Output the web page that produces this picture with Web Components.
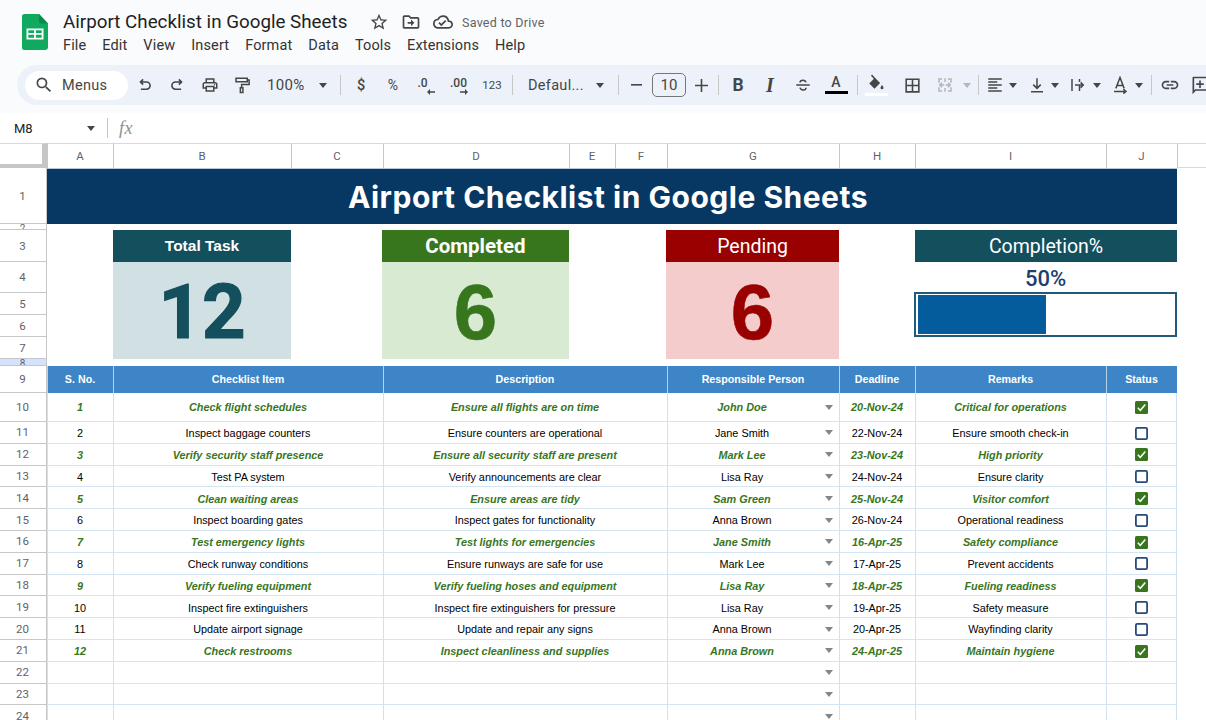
<!DOCTYPE html>
<html lang="en"><head><meta charset="utf-8"><title>Airport Checklist in Google Sheets</title>
<style>html,body{margin:0;padding:0;background:#fff;overflow:hidden;width:1206px;height:720px;font-family:"Liberation Sans",Arial,sans-serif}</style>
</head><body>
<sheets-app></sheets-app>
<script>
const I={
search:'<path fill="currentColor" d="M15.5 14h-.79l-.28-.27A6.471 6.471 0 0 0 16 9.5 6.5 6.5 0 1 0 9.5 16c1.61 0 3.09-.59 4.23-1.57l.27.28v.79l5 4.99L20.49 19l-4.99-5zm-6 0C7.01 14 5 11.99 5 9.5S7.01 5 9.5 5 14 7.01 14 9.5 11.99 14 9.5 14z"/>',
undo:'<path fill="none" stroke="currentColor" stroke-width="2.200" d="M9.500 4.500 6 8l3.500 3.500M6 8h8a4.800 4.800 0 0 1 0 9.600H6.500"/>',
redo:'<path fill="none" stroke="currentColor" stroke-width="2.200" d="M14.500 4.500 18 8l-3.500 3.500M18 8h-8a4.800 4.800 0 0 0 0 9.600h7.500"/>',
print:'<path fill="currentColor" d="M19 8h-1V3H6v5H5c-1.66 0-3 1.34-3 3v6h4v4h12v-4h4v-6c0-1.66-1.34-3-3-3zM8 5h8v3H8V5zm8 12v2H8v-4h8v2zm2-2v-2H6v2H4v-4c0-.55.45-1 1-1h14c.55 0 1 .45 1 1v4h-2z"/><circle fill="currentColor" cx="18" cy="11.5" r="1"/>',
paint:'<path fill="none" stroke="currentColor" stroke-width="2" d="M4 3h15v4.500H4zM19 5.200h2.500v6H11.500v4M9.800 15.500h3.400V22H9.800z"/>',
star:'<path fill="currentColor" d="M22 9.24l-7.19-.62L12 2 9.19 8.63 2 9.24l5.46 4.73L5.82 21 12 17.27 18.18 21l-1.63-7.03L22 9.24zM12 15.4l-3.76 2.27 1-4.28-3.32-2.88 4.38-.38L12 6.1l1.71 4.04 4.38.38-3.32 2.88 1 4.28L12 15.4z"/>',
move:'<path fill="currentColor" d="M20 6h-8l-2-2H4c-1.1 0-1.99.9-1.99 2L2 18c0 1.1.9 2 2 2h16c1.1 0 2-.9 2-2V8c0-1.1-.9-2-2-2zm0 12H4V6h5.17l2 2H20v10zm-8-4H8v-2h4V9l4 4-4 4v-3z"/>',
cloud:'<path fill="currentColor" d="M19.35 10.04A7.49 7.49 0 0 0 12 4C9.11 4 6.6 5.64 5.35 8.04A5.994 5.994 0 0 0 0 14c0 3.31 2.69 6 6 6h13c2.76 0 5-2.24 5-5 0-2.64-2.05-4.78-4.65-4.96zM19 18H6c-2.21 0-4-1.79-4-4 0-2.05 1.53-3.76 3.56-3.97l1.07-.11.5-.95A5.469 5.469 0 0 1 12 6c2.62 0 4.88 1.86 5.39 4.43l.3 1.5 1.53.11A2.98 2.98 0 0 1 22 15c0 1.65-1.35 3-3 3zm-9-3.82l-2.09-2.09L6.5 13.5 10 17l6.01-6.01-1.41-1.41z"/>',
borders:'<path fill="currentColor" d="M3 3v18h18V3H3zm8 16H5v-6h6v6zm0-8H5V5h6v6zm8 8h-6v-6h6v6zm0-8h-6V5h6v6z"/>',
link:'<path fill="currentColor" d="M3.9 12c0-1.71 1.39-3.1 3.1-3.1h4V7H7c-2.76 0-5 2.24-5 5s2.24 5 5 5h4v-1.9H7c-1.71 0-3.1-1.39-3.1-3.1zM8 13h8v-2H8v2zm9-6h-4v1.9h4c1.71 0 3.1 1.39 3.1 3.1s-1.39 3.1-3.1 3.1h-4V17h4c2.76 0 5-2.24 5-5s-2.24-5-5-5z"/>',
strike:'<path fill="none" stroke="currentColor" stroke-width="2" d="M3 12h18M16 8.500C15.500 6.500 14 5.500 12 5.500S8 6.500 8 8.500M8 15.500c.5 2 2 3 4 3s4-1 4-3"/>',
fill:'<path fill="none" stroke="currentColor" stroke-width="2" d="M6 1.500 11 7"/><path fill="currentColor" d="M10.500 5 3 12.500 10 19.500 17.500 12z"/><path fill="currentColor" d="M20 14.500s-2 2.300-2 3.700a2 2 0 0 0 4 0c0-1.400-2-3.700-2-3.700z"/>',
merge:'<path fill="none" stroke="currentColor" stroke-width="2" d="M8 4H4v5M4 15v5h4M16 4h4v5M20 15v5h-4M11 12H5M8 9l-3 3 3 3M13 12h6M16 9l3 3-3 3M12 3v5M12 16v5"/>',
align:'<path fill="currentColor" d="M3 3h18v2H3zM3 7h12v2H3zM3 11h18v2H3zM3 15h12v2H3zM3 19h18v2H3z"/>',
valign:'<path fill="none" stroke="currentColor" stroke-width="2" d="M12 3v13M7 11.500l5 5 5-5M4 21h16"/>',
wrap:'<path fill="none" stroke="currentColor" stroke-width="2" d="M4 4v16M14 4v4M14 12v8M8 12h11M15.500 8.500 19 12l-3.500 3.500"/>',
rotate:'<path fill="none" stroke="currentColor" stroke-width="2" d="M4 20.500h16M16.500 17.500 20 20.500l-3.500 3"/><path fill="none" stroke="currentColor" stroke-width="2" d="M6.500 16.500 12 2l5.500 14.500M8 12.500h8"/>',
comment:'<path fill="currentColor" d="M4 2h17a1 1 0 0 1 1 1v15a1 1 0 0 1-1 1H7l-4 4V3a1 1 0 0 1 1-1zm1 2v14.200L6.200 17H20V4zm6 2.500h2V10h3.500v2H13v3.500h-2V12H7.500v-2H11z"/>'
};
const svg=(n,s=18,extra='')=>`<svg viewBox="0 0 24 24" width="${s}" height="${s}" style="display:block;${extra}" aria-hidden="true">${I[n]}</svg>`;

class TitleBar extends HTMLElement{constructor(){super();const r=this.attachShadow({mode:'open'});
const menus=['File','Edit','View','Insert','Format','Data','Tools','Extensions','Help'];
r.innerHTML=`<style>
:host{display:flex;height:65px;box-sizing:border-box;padding:14px 0 0 22px;background:#f9fbfd;color:#202124;font-family:Roboto,sans-serif}
.logo{width:26px;height:36px;flex:none}
.txt{margin-left:15px;display:flex;flex-direction:column}
.top{display:flex;align-items:center;height:18px;margin-top:-1px}
h1{font:400 18.800px/18px Roboto,sans-serif;margin:0;color:#1f1f1f;width:306px;white-space:nowrap}
.ic{color:#444746;margin-right:12px}
.saved{font:400 12.500px Roboto,sans-serif;color:#5f6368;margin-left:-3px;letter-spacing:.25px}
nav{display:flex;gap:16px;margin-top:6px;font:400 14.500px/17px Roboto,sans-serif;color:#333;letter-spacing:.13px}
</style>
<svg class="logo" viewBox="0 0 26 36"><path fill="#11a860" d="M2.500 0H17l9 9.500V33a3 3 0 0 1-3 3H2.500a2.500 2.500 0 0 1-2.500-2.500V2.500A2.500 2.500 0 0 1 2.500 0z"/><path fill="#0d8a4e" d="M17 0l9 9.500h-7a2 2 0 0 1-2-2z"/><path fill="#fff" d="M4.500 14.500h17v11h-17zm1.800 1.800V19h5.800v-2.700zm7.600 0V19h5.800v-2.700zm-7.600 4.400v3h5.800v-3zm7.600 0v3h5.800v-3z"/></svg>
<div class="txt"><div class="top"><h1>Airport Checklist in Google Sheets</h1>
<span class="ic">${svg('star',20)}</span><span class="ic">${svg('move',20)}</span><span class="ic">${svg('cloud',20)}</span><span class="saved">Saved to Drive</span></div>
<nav>${menus.map(m=>`<span>${m}</span>`).join('')}</nav></div>`;}}
customElements.define('title-bar',TitleBar);

class ToolBar extends HTMLElement{constructor(){super();const r=this.attachShadow({mode:'open'});
const it=(w,inner,ml=0,cl='')=>`<span class="it ${cl}" style="width:${w}px;margin-left:${ml}px">${inner}</span>`;
const car=(w=8,ml=0,c='')=>it(w,'<i class="car"></i>',ml,c);
const sep=(w,ml=0)=>it(w,'<b class="sep"></b>',ml);
const ic=(w,n,s=18,ml=0,c='')=>it(w,svg(n,s),ml,c);
const lArr='<svg class="ar" width="8" height="6" viewBox="0 0 8 6"><path d="M3 0 0 3l3 3V3.800h5V2.200H3z" fill="currentColor"/></svg>';
const rArr='<svg class="ar" width="8" height="6" viewBox="0 0 8 6"><path d="M5 0l3 3-3 3V3.800H0V2.200h5z" fill="currentColor"/></svg>';
r.innerHTML=`<style>
:host{display:block;background:#f9fbfd;height:48px}
.bar{height:40px;background:#edf2fa;margin-left:17px;border-radius:20px 0 0 20px;display:flex;align-items:center;padding-left:8px;overflow:hidden;color:#444746;font:400 13.500px Roboto,sans-serif}
.it{flex:none;display:flex;align-items:center;justify-content:center;height:30px;white-space:nowrap}
.pill{width:103px;height:29px;background:#fff;border-radius:15px;display:flex;align-items:center;flex:none;color:#444746;font-size:14.500px;letter-spacing:.3px}
.pill svg{margin:0 8px 0 9px}
.car{display:block;width:0;height:0;border:4.500px solid transparent;border-top:5px solid #444746;border-bottom:0}
.dis .car{border-top-color:#b4b6b8}
.dis{color:#b4b6b8}
.sep{display:block;width:1px;height:20px;background:#c7c7c7}
.box{box-sizing:border-box;width:34px;height:24px;border:1px solid #747775;border-radius:5px;display:flex;align-items:center;justify-content:center;font-size:15px}
.zoom{justify-content:space-between;box-sizing:border-box;padding:0 9px 0 10px;font-size:15px;letter-spacing:.3px}
.font{justify-content:space-between;box-sizing:border-box;padding:0 8px 0 13px;font-size:14.500px;letter-spacing:.3px}
.n{font-size:14px}
.dol{font-weight:500;font-size:14.500px}
.fmt{display:flex;flex-direction:column;line-height:11px;font-size:12px;font-weight:500;margin-top:2px}
.fmt .ar{display:block;align-self:flex-end}
.a{flex-direction:column;font-weight:500;font-size:14px;line-height:13px}
.a s{display:block;text-decoration:none;width:23px;height:3.500px;background:#000;margin-top:2px}
.bi{font-size:17.500px;font-weight:700;font-family:Roboto,sans-serif}
.ii{font-size:20px;font-weight:700;font-style:italic;font-family:"Liberation Serif",serif}
.fillw{flex-direction:column}
.fillw s{display:block;width:23px;height:3.500px;background:#fff;margin-top:1px}
</style><div class="bar">
<span class="pill">${svg('search',20)}<span>Menus</span></span>
${ic(32,'undo',18,1)}${ic(32,'redo')}${ic(33,'print')}${ic(31,'paint')}
${it(79,'<span>100%</span><i class="car"></i>',0,'zoom')}
${sep(9)}
${it(32,'<span>$</span>',0,'dol')}${it(32,'<span>%</span>',0,'n')}
${it(34,'<span class="fmt" style="width:17px"><span>.0</span>'+lArr+'</span>')}${it(32,'<span class="fmt" style="width:18px"><span>.00</span>'+rArr+'</span>')}
${it(34,'<span style="font-size:11.500px">123</span>')}
${sep(6)}
${it(97,'<span>Defaul...</span><i class="car"></i>',0,'font')}
${sep(13)}
${it(22,'<svg width="11" height="2" style="display:block"><rect width="11" height="1.600" fill="currentColor"/></svg>')}
${it(44,'<span class="box">10</span>')}
${it(20,'<svg width="13" height="13" style="display:block"><path d="M5.700 0h1.600v5.700H13v1.600H7.300V13H5.700V7.300H0V5.700h5.700z" fill="currentColor"/></svg>')}
${sep(14)}
${it(26,'<span>B</span>',0,'bi')}${it(38,'<span>I</span>',0,'ii')}${ic(28,'strike',18)}
${it(38,'<span>A</span><s></s>',0,'a')}
${sep(4)}
${it(34,svg('fill',18)+'<s></s>',0,'fillw')}${ic(38,'borders',19)}${ic(28,'merge',18,0,'dis')}${car(16,0,'dis')}
${sep(6)}
${ic(28,'align',18)}${car()}${ic(28,'valign',18,6)}${car()}${ic(28,'wrap',18,5)}${car(8,1)}${ic(28,'rotate',18,5)}${car(8,1)}
${sep(16)}${ic(22,'link',20)}${ic(28,'comment',20,5)}
</div>`;}}
customElements.define('tool-bar',ToolBar);

class FormulaBar extends HTMLElement{constructor(){super();this.attachShadow({mode:'open'}).innerHTML=`<style>
:host{display:flex;align-items:center;height:30px;background:#fff;color:#444746;box-sizing:border-box;font:400 13px Roboto,sans-serif}
.nm{padding-left:14px;width:73px;color:#202124}
.car{width:0;height:0;border:4.500px solid transparent;border-top:5px solid #444746;border-bottom:0}
.sep{width:1px;height:20px;background:#c7c7c7;margin:0 11px 0 12px}
.fx{font:italic 400 18px "Liberation Serif",serif;color:#8b9095;letter-spacing:.5px}
</style><span class="nm">M8</span><i class="car"></i><b class="sep"></b><span class="fx">fx</span>`;}}
customElements.define('formula-bar',FormulaBar);

class KpiCard extends HTMLElement{constructor(){super();this.attachShadow({mode:'open'}).innerHTML=`<style>
:host{display:grid;grid-template-rows:32px 1fr;min-width:0;min-height:0;text-align:center}
.h{background:var(--head);color:#fff;display:flex;align-items:center;justify-content:center;font:var(--hfont);padding-bottom:var(--hp,0)}
.v{background:var(--soft);color:var(--head);display:flex;align-items:center;justify-content:center;font:var(--vfont);-webkit-text-stroke:var(--vs) var(--head);padding-top:2px}
</style><div class="h"><slot name="title"></slot></div><div class="v"><slot name="value"></slot></div>`;}}
customElements.define('kpi-card',KpiCard);

class ProgressCard extends HTMLElement{constructor(){super();this.attachShadow({mode:'open'}).innerHTML=`<style>
:host{display:flex;flex-direction:column;min-width:0;min-height:0;margin-left:-1px}
.h{height:32px;margin-left:1px;background:#134f5c;color:#fff;display:flex;align-items:center;justify-content:center;font:400 19.500px Roboto,sans-serif}
.p{height:30px;display:flex;align-items:center;justify-content:center;font:500 22px Roboto,sans-serif;color:#1c3f6e;margin-top:1px}
.t{box-sizing:border-box;height:45px;border:2px solid #1f5a78;padding:1px 2px;margin-top:-1px}
.f{height:100%;width:50%;background:#045c9c}
</style><div class="h"><slot></slot></div><div class="p">50%</div><div class="t"><div class="f"></div></div>`;}}
customElements.define('progress-card',ProgressCard);

class CheckMark extends HTMLElement{constructor(){super();const c=this.hasAttribute('checked');this.attachShadow({mode:'open'}).innerHTML=`<style>
:host{display:block;width:13px;height:13px}
svg{display:block}
</style><svg width="13" height="13" viewBox="0 0 13 13">${c?'<rect width="13" height="13" rx="1.500" fill="#38761d"/><path d="M2.800 6.800 5.300 9.300 10.300 3.500" fill="none" stroke="#fff" stroke-width="1.500"/>':'<rect x=".9" y=".9" width="11.200" height="11.200" rx="1.300" fill="none" stroke="#274a78" stroke-width="1.800"/>'}</svg>`;}}
customElements.define('check-mark',CheckMark);

const DATA=[
[1,'Check flight schedules','Ensure all flights are on time','John Doe','20-Nov-24','Critical for operations',1],
[2,'Inspect baggage counters','Ensure counters are operational','Jane Smith','22-Nov-24','Ensure smooth check-in',0],
[3,'Verify security staff presence','Ensure all security staff are present','Mark Lee','23-Nov-24','High priority',1],
[4,'Test PA system','Verify announcements are clear','Lisa Ray','24-Nov-24','Ensure clarity',0],
[5,'Clean waiting areas','Ensure areas are tidy','Sam Green','25-Nov-24','Visitor comfort',1],
[6,'Inspect boarding gates','Inspect gates for functionality','Anna Brown','26-Nov-24','Operational readiness',0],
[7,'Test emergency lights','Test lights for emergencies','Jane Smith','16-Apr-25','Safety compliance',1],
[8,'Check runway conditions','Ensure runways are safe for use','Mark Lee','17-Apr-25','Prevent accidents',0],
[9,'Verify fueling equipment','Verify fueling hoses and equipment','Lisa Ray','18-Apr-25','Fueling readiness',1],
[10,'Inspect fire extinguishers','Inspect fire extinguishers for pressure','Lisa Ray','19-Apr-25','Safety measure',0],
[11,'Update airport signage','Update and repair any signs','Anna Brown','20-Apr-25','Wayfinding clarity',0],
[12,'Check restrooms','Inspect cleanliness and supplies','Anna Brown','24-Apr-25','Maintain hygiene',1]];

class SheetGrid extends HTMLElement{constructor(){super();const r=this.attachShadow({mode:'open'});
const rows=[25,56,6,32,31,22,22,22,7,27,29,...Array(14).fill(21.8)];
const cols=['A','B','C','D','E','F','G','H','I','J'];
let h='';
h+=`<div class="corner" style="grid-area:1/1"></div>`;
cols.forEach((c,i)=>h+=`<div class="ch" style="grid-area:1/${i+2}">${c}</div>`);
h+=`<div class="ch end" style="grid-area:1/12"></div>`;
rows.slice(1).forEach((_,i)=>{const n=i+1;h+=`<div class="rh${n===8?' sel':''}${n===2||n===8?' tiny':''}" style="grid-area:${n+1}/1"><span>${n}</span></div>`});
h+=`<div class="banner" style="grid-area:2/2/3/12">Airport Checklist in Google Sheets</div>`;
const big='--vfont:700 76px/1 Roboto,sans-serif;--vs:1.200px;';
const six='--vfont:700 78px/1 Liberation Sans,sans-serif;--vs:.6px;';
const kpi=(col,head,soft,hf,t,v,x='')=>`<kpi-card style="grid-area:4/${col}/9/${col+1};--head:${head};--soft:${soft};--hfont:${hf};${x}"><span slot="title">${t}</span><span slot="value">${v}</span></kpi-card>`;
h+=kpi(3,'#134f5c','#d0e0e3','700 15.500px Liberation Sans,sans-serif','Total Task','12',big+'--hp:1px');
h+=kpi(5,'#38761d','#d9ead3','700 20.500px Roboto,sans-serif','Completed','6',six+'margin-left:-1px');
h+=kpi(8,'#990000','#f4cccc','400 19.500px Roboto,sans-serif','Pending','6',six+'margin-left:-1px');
h+=`<progress-card style="grid-area:4/10/9/12">Completion%</progress-card>`;
const spans=[[2,3],[3,5],[5,8],[8,9],[9,10],[10,11],[11,12]];
['S. No.','Checklist Item','Description','Responsible Person','Deadline','Remarks','Status'].forEach((t,i)=>{h+=`<div class="th" style="grid-area:10/${spans[i][0]}/11/${spans[i][1]}">${t}</div>`});
for(let i=0;i<15;i++){const d=DATA[i],row=11+i,done=d&&d[6];
 spans.forEach((s,j)=>{let inner='',cl='td'+(done?' done':'')+(j===6?' last':'')+(i===0?' first':'');
  if(d&&j<6)inner=`<span>${d[j]}</span>`;
  if(j===3){cl+=' dd';inner+='<i class="arr"></i>'}
  if(d&&j===6)inner=`<check-mark ${done?'checked':''}></check-mark>`;
  h+=`<div class="${cl}" style="grid-area:${row}/${s[0]}/${row+1}/${s[1]}">${inner}</div>`;
 });}
r.innerHTML=`<style>
:host{display:grid;grid-template-columns:47px 66px 178px 92px 186px 46px 52px 172px 76px 191px 71px 29px;grid-template-rows:${rows.map(x=>x+'px').join(' ')};background:#fff;overflow:hidden;height:577px;font-family:"Liberation Sans",Arial,sans-serif}
div{box-sizing:border-box;min-width:0;min-height:0}
.corner{background:#fff;border-top:1px solid #d9d9d9;border-right:5px solid #c4c7c5;border-bottom:4px solid #c4c7c5}
.ch{display:flex;align-items:center;justify-content:center;font:400 11.500px Roboto,sans-serif;color:#5f6368;background:#fff;border-top:1px solid #d9d9d9;border-left:1px solid #c7c7c7;padding-right:1px}
.ch.end{border-bottom:1px solid #d9d9d9}
.rh{display:flex;align-items:center;justify-content:center;font:400 11.500px Roboto,sans-serif;color:#5f6368;border-right:1px solid #c7c7c7;border-bottom:1px solid #c7c7c7;padding-right:1px;overflow:hidden;background:#fff}
.rh.tiny{align-items:flex-start;font-size:10px;line-height:10px}
.rh.sel{background:#d3e3fd}
.banner{background:#073763;color:#fff;display:flex;align-items:center;justify-content:center;font:700 30px Inter,Roboto,sans-serif;letter-spacing:.5px;padding:1px 8px 0 0;border-top:1px solid #b7c9d8}
.th{background:#3d85c6;color:#fff;font:700 10.700px "Liberation Sans",sans-serif;display:flex;align-items:center;justify-content:center;border-left:1px solid #b6d2ec;padding:0 1px 1px 0}
.td{display:flex;align-items:center;justify-content:center;font:400 10.850px "Liberation Sans",sans-serif;color:#000;border-left:1px solid #cfe2f3;border-bottom:1px solid #d4e5f4;white-space:nowrap;position:relative;padding:1.600px 1px 0 0}
.td.first{padding-top:0}
.last{border-right:1px solid #cfe2f3}
.done{color:#38761d;font-weight:700;font-style:italic}
.td.dd{padding-right:23px}
.arr{position:absolute;right:6px;top:50%;margin-top:-2px;width:0;height:0;border:4px solid transparent;border-top:5px solid #80868b;border-bottom:0}
</style>${h}`;}}
customElements.define('sheet-grid',SheetGrid);

class SheetsApp extends HTMLElement{constructor(){super();this.attachShadow({mode:'open'}).innerHTML=`<style>:host{display:block;width:1206px;height:720px;overflow:hidden}</style><title-bar></title-bar><tool-bar></tool-bar><formula-bar></formula-bar><sheet-grid></sheet-grid>`;}}
customElements.define('sheets-app',SheetsApp);
</script></body></html>
